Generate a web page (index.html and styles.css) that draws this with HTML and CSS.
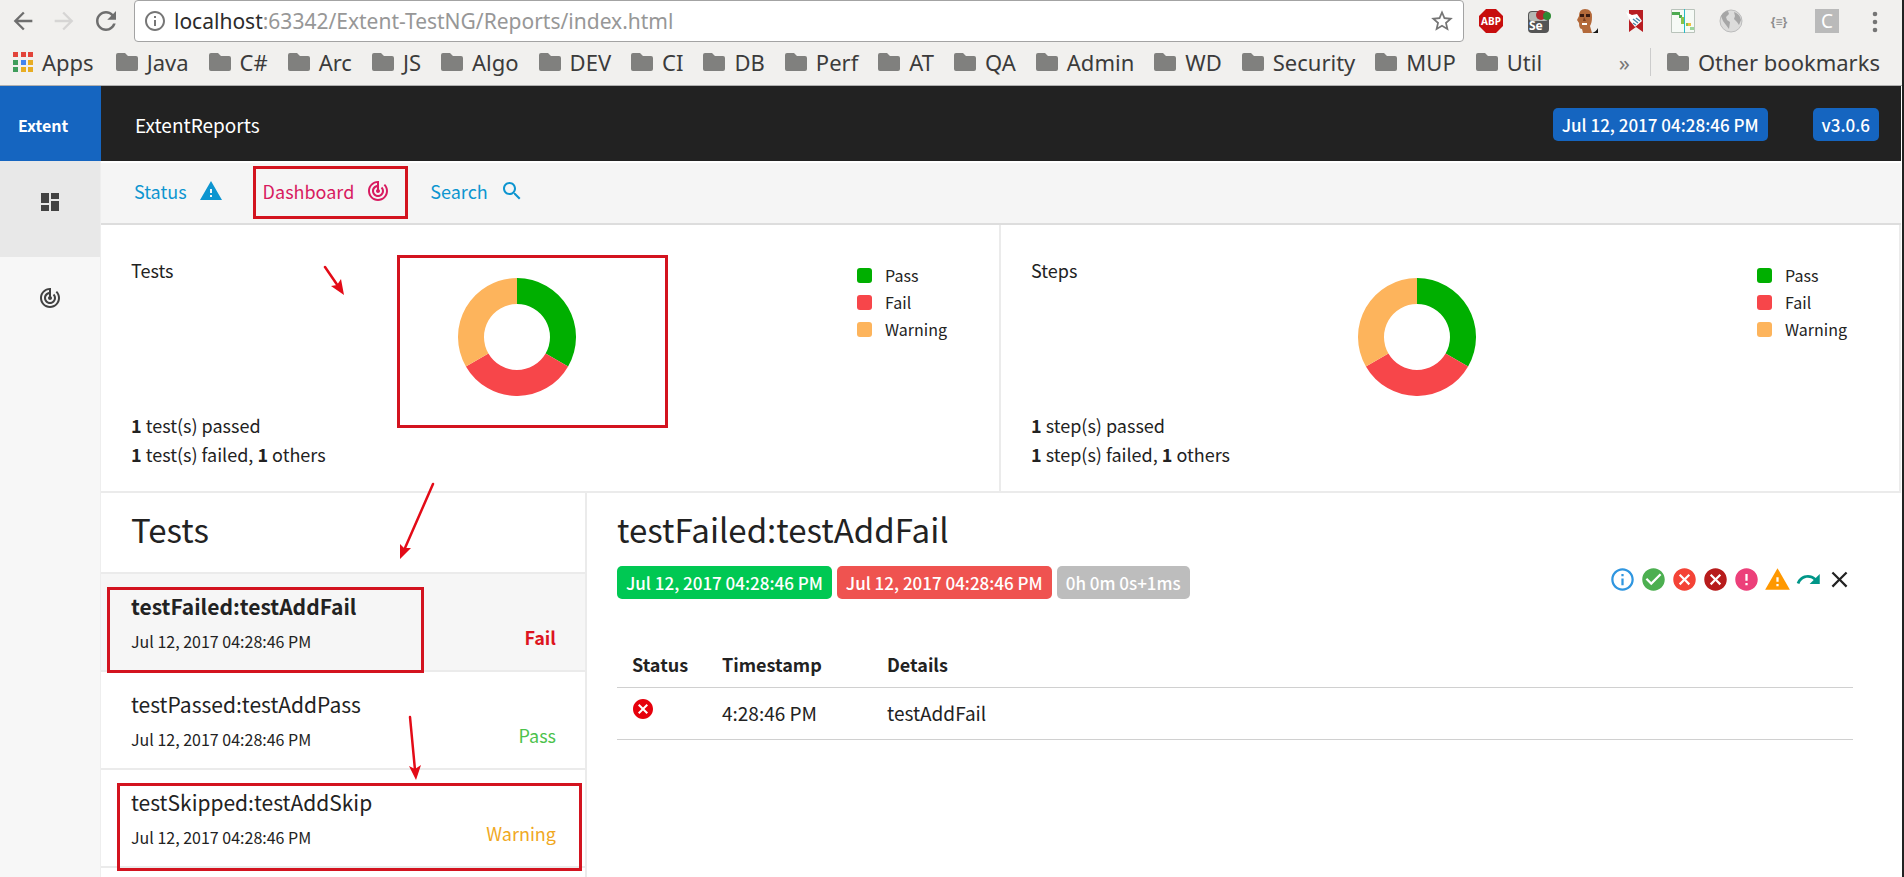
FILE: index.html
```html
<!DOCTYPE html>
<html lang="en">
<head>
<meta charset="utf-8">
<title>ExtentReports</title>
<link rel="stylesheet" href="styles.css">
</head>
<body>
<svg class="defs" aria-hidden="true">
  <symbol id="folder" viewBox="0 0 22 18"><path fill="#80807e" d="M2 0h7l3 3h8a2 2 0 0 1 2 2v11a2 2 0 0 1-2 2H2a2 2 0 0 1-2-2V2a2 2 0 0 1 2-2z"/></symbol>
  <symbol id="track" viewBox="0 0 24 24"><path d="M19.07 4.93l-1.41 1.41C19.1 7.79 20 9.79 20 12c0 4.42-3.58 8-8 8s-8-3.58-8-8c0-4.08 3.05-7.44 7-7.93v2.02C8.16 6.57 6 9.03 6 12c0 3.31 2.69 6 6 6s6-2.69 6-6c0-1.66-.67-3.16-1.76-4.24l-1.41 1.41C15.55 9.9 16 10.9 16 12c0 2.21-1.79 4-4 4s-4-1.79-4-4c0-1.86 1.28-3.41 3-3.86v2.14c-.6.35-1 .98-1 1.72 0 1.1.9 2 2 2s2-.9 2-2c0-.74-.4-1.38-1-1.72V2h-1C6.48 2 2 6.48 2 12s4.48 10 10 10 10-4.48 10-10c0-2.76-1.12-5.26-2.93-7.07z"/></symbol>
  <symbol id="warning" viewBox="0 0 24 24"><path d="M1 21h22L12 2 1 21zm12-3h-2v-2h2v2zm0-4h-2v-4h2v4z"/></symbol>
  <symbol id="cancel" viewBox="0 0 24 24"><path d="M12 2C6.47 2 2 6.47 2 12s4.47 10 10 10 10-4.47 10-10S17.53 2 12 2zm5 13.59L15.59 17 12 13.41 8.41 17 7 15.59 10.59 12 7 8.41 8.41 7 12 10.59 15.59 7 17 8.41 13.41 12 17 15.59z"/></symbol>
  <symbol id="info" viewBox="0 0 24 24"><path d="M11 17h2v-6h-2v6zm1-15C6.48 2 2 6.48 2 12s4.48 10 10 10 10-4.48 10-10S17.52 2 12 2zm0 18c-4.41 0-8-3.59-8-8s3.59-8 8-8 8 3.59 8 8-3.59 8-8 8zM11 9h2V7h-2v2z"/></symbol>
  <symbol id="donut" viewBox="0 0 118 118">
    <g fill="none" stroke-width="26">
      <path stroke="#00af00" d="M59 13A46 46 0 0 1 98.84 82"/>
      <path stroke="#f7464a" d="M98.84 82A46 46 0 0 1 19.16 82"/>
      <path stroke="#fdb45c" d="M19.16 82A46 46 0 0 1 59 13"/>
    </g>
  </symbol>
</svg>

<div class="browser">
  <div class="toolbar">
    <button class="tool" aria-label="Back"><svg width="28" height="28" viewBox="0 0 24 24" fill="#6e6e6e"><path d="M20 11H7.83l5.59-5.59L12 4l-8 8 8 8 1.41-1.41L7.83 13H20v-2z"/></svg></button>
    <button class="tool" aria-label="Forward"><svg width="28" height="28" viewBox="0 0 24 24" fill="#d6d5d4"><path d="M12 4l-1.41 1.41L16.17 11H4v2h12.17l-5.58 5.59L12 20l8-8z"/></svg></button>
    <button class="tool" aria-label="Reload"><svg width="30" height="30" viewBox="0 0 24 24" fill="#6e6e6e"><path d="M17.65 6.35C16.2 4.9 14.21 4 12 4c-4.42 0-7.99 3.58-7.99 8s3.57 8 7.99 8c3.73 0 6.84-2.55 7.73-6h-2.08c-.82 2.33-3.04 4-5.65 4-3.31 0-6-2.69-6-6s2.69-6 6-6c1.66 0 3.14.69 4.22 1.78L13 11h7V4l-2.35 2.35z"/></svg></button>
    <div class="address">
      <svg class="addr-info" width="24" height="24" fill="#767676"><use href="#info"/></svg>
      <span class="url"><span class="host">localhost</span>:63342/Extent-TestNG/Reports/index.html</span>
      <button class="tool star" aria-label="Bookmark this page"><svg width="26" height="26" viewBox="0 0 24 24" fill="#757575"><path d="M22 9.24l-7.19-.62L12 2 9.19 8.63 2 9.24l5.46 4.73L5.82 21 12 17.27 18.18 21l-1.63-7.03L22 9.24zM12 15.4l-3.76 2.27 1-4.28-3.32-2.88 4.38-.38L12 6.1l1.71 4.04 4.38.38-3.32 2.88 1 4.28L12 15.4z"/></svg></button>
    </div>
    <div class="extensions">
      <button class="tool" aria-label="Adblock Plus"><svg width="24" height="24" viewBox="0 0 24 24"><path fill="#c70d0d" d="M7 0h10l7 7v10l-7 7H7l-7-7V7z"/><text x="12" y="16" font-size="10" font-weight="700" text-anchor="middle" fill="#fff">ABP</text></svg></button>
      <button class="tool" aria-label="Selenium"><svg width="24" height="24" viewBox="0 0 24 24"><rect x="1" y="2" width="21" height="22" rx="4" fill="#555"/><rect x="2" y="3" width="19" height="9" rx="3" fill="#b5b8b5"/><circle cx="14" cy="6" r="5" fill="#b3262c"/><circle cx="20" cy="7" r="4" fill="#2d8a34"/><text x="2" y="21" font-size="12" font-weight="700" fill="#fff">Se</text></svg></button>
      <button class="tool" aria-label="User profile"><svg width="24" height="24" viewBox="0 0 24 24"><path fill="#b3693a" d="M4 7Q4 0 10 0q7 0 7 8 0 6-2 9l2 7H8l-1-4q-3 0-3-6l-2-3z"/><path fill="#3a1a10" d="M5 5h4v3H5zM11 5h4v3h-4z"/><path fill="#fff" d="M7 14h5v2H7z"/><path fill="#7c3f20" d="M9 8l2 4H8z"/><path fill="#151515" d="M23 19v5h-6q4-1 6-5z"/></svg></button>
      <button class="tool" aria-label="Bookmark tool"><svg width="24" height="24" viewBox="0 0 24 24"><path fill="#b81d22" d="M6 1h14v22l-7-5-7 5z"/><path fill="#fff" d="M3 3l6 3 5-1 5 7-7 6-5-6z"/><path fill="none" stroke="#4c87a8" stroke-width="1.500" d="M10 10l5 4M13 9l4 3M10 14l3 2"/></svg></button>
      <button class="tool" aria-label="Timeline"><svg width="24" height="24" viewBox="0 0 24 24"><path fill="#f6faf6" stroke="#b9c3ba" d="M.5.5h23v23H.5z"/><path fill="#4caa50" d="M1 3h8v3H1zM8 6h3v3H8z"/><path fill="#8bc34a" d="M10 8h3v7h-3zM15 14h3v3h-3z"/><path fill="#f0c040" d="M17 14h3v3h-3z"/><path fill="#9ad49b" d="M19 18h4v3h-4z"/><path fill="#26bcc8" d="M13 0h1v24h-1z"/></svg></button>
      <button class="tool" aria-label="Globe"><svg width="24" height="24" viewBox="0 0 24 24"><circle cx="12" cy="12" r="11" fill="#dcdcdb" stroke="#bcbcbc"/><path fill="#a6a6a6" d="M2 7q3-5 7-5l1 3-3 3 1 3 3 2-1 7-3-4-3-4zM15 3q6 2 7 8l-2 5-2-3-3-3 1-3z"/></svg></button>
      <button class="tool" aria-label="JSON viewer"><svg width="24" height="24" viewBox="0 0 24 24"><text x="12" y="17" font-size="12" font-weight="700" text-anchor="middle" fill="#8c8c8c">{≡}</text></svg></button>
      <button class="tool" aria-label="C extension"><svg width="24" height="24" viewBox="0 0 24 24"><path fill="#bababa" d="M0 0h24v24H0z"/><text x="12" y="19" font-size="19" text-anchor="middle" fill="#fff">C</text></svg></button>
      <button class="tool" aria-label="Menu"><svg width="24" height="24" viewBox="0 0 24 24" fill="#757575"><circle cx="12" cy="5" r="2.300"/><circle cx="12" cy="13" r="2.300"/><circle cx="12" cy="21" r="2.300"/></svg></button>
    </div>
  </div>
  <nav class="bookmarks" aria-label="Bookmarks">
    <a class="bookmark apps" href="#"><svg width="20" height="20" viewBox="0 0 20 20"><path fill="#e2443a" d="M0 0h5v5H0zM8 0h5v5H8zM15 0h5v5h-5z"/><path fill="#3f9d5b" d="M0 8h5v5H0zM0 15h5v5H0z"/><path fill="#4285f4" d="M8 8h5v5H8z"/><path fill="#e8ad23" d="M15 8h5v5h-5zM8 15h5v5H8zM15 15h5v5h-5z"/></svg>Apps</a>
    <a class="bookmark" href="#"><svg width="22" height="18"><use href="#folder"/></svg>Java</a>
    <a class="bookmark" href="#"><svg width="22" height="18"><use href="#folder"/></svg>C#</a>
    <a class="bookmark" href="#"><svg width="22" height="18"><use href="#folder"/></svg>Arc</a>
    <a class="bookmark" href="#"><svg width="22" height="18"><use href="#folder"/></svg>JS</a>
    <a class="bookmark" href="#"><svg width="22" height="18"><use href="#folder"/></svg>Algo</a>
    <a class="bookmark" href="#"><svg width="22" height="18"><use href="#folder"/></svg>DEV</a>
    <a class="bookmark" href="#"><svg width="22" height="18"><use href="#folder"/></svg>CI</a>
    <a class="bookmark" href="#"><svg width="22" height="18"><use href="#folder"/></svg>DB</a>
    <a class="bookmark" href="#"><svg width="22" height="18"><use href="#folder"/></svg>Perf</a>
    <a class="bookmark" href="#"><svg width="22" height="18"><use href="#folder"/></svg>AT</a>
    <a class="bookmark" href="#"><svg width="22" height="18"><use href="#folder"/></svg>QA</a>
    <a class="bookmark" href="#"><svg width="22" height="18"><use href="#folder"/></svg>Admin</a>
    <a class="bookmark" href="#"><svg width="22" height="18"><use href="#folder"/></svg>WD</a>
    <a class="bookmark" href="#"><svg width="22" height="18"><use href="#folder"/></svg>Security</a>
    <a class="bookmark" href="#"><svg width="22" height="18"><use href="#folder"/></svg>MUP</a>
    <a class="bookmark" href="#"><svg width="22" height="18"><use href="#folder"/></svg>Util</a>
    <button class="tool more" aria-label="More bookmarks">»</button>
    <a class="bookmark other" href="#"><svg width="22" height="18"><use href="#folder"/></svg>Other bookmarks</a>
  </nav>
</div>

<div class="report">
  <header class="topbar">
    <a class="brand" href="#">Extent</a>
    <span class="report-name">ExtentReports</span>
    <span class="label blue">Jul 12, 2017 04:28:46 PM</span>
    <span class="label blue version">v3.0.6</span>
  </header>
  <div class="body">
    <nav class="sidebar" aria-label="Views">
      <a class="side-item active" href="#" aria-label="Tests"><svg width="24" height="24" viewBox="0 0 24 24" fill="#424242"><path d="M3 13h8V3H3v10zm0 8h8v-6H3v6zm10 0h8V11h-8v10zm0-18v6h8V3h-8z"/></svg></a>
      <a class="side-item" href="#" aria-label="Dashboard"><svg width="24" height="24" fill="#424242"><use href="#track"/></svg></a>
    </nav>
    <main class="main">
      <nav class="controls" aria-label="Controls">
        <a class="control" href="#">Status<svg width="24" height="24"><use href="#warning"/></svg></a>
        <a class="control pink" href="#">Dashboard<svg width="24" height="24"><use href="#track"/></svg></a>
        <a class="control" href="#">Search<svg width="24" height="24" viewBox="0 0 24 24"><path d="M15.5 14h-.79l-.28-.27C15.41 12.59 16 11.11 16 9.500 16 5.910 13.090 3 9.500 3S3 5.910 3 9.500 5.910 16 9.500 16c1.610 0 3.090-.59 4.230-1.570l.27.28v.79l5 4.990L20.490 19l-4.990-5zm-6 0C7.010 14 5 11.990 5 9.500S7.010 5 9.500 5 14 7.010 14 9.500 11.990 14 9.500 14z"/></svg></a>
      </nav>
      <section class="charts">
        <article class="chart-card">
          <h2 class="chart-title">Tests</h2>
          <svg class="donut" width="118" height="118" role="img" aria-label="Tests chart"><use href="#donut"/></svg>
          <ul class="legend"><li class="pass">Pass</li><li class="fail">Fail</li><li class="warn">Warning</li></ul>
          <div class="counts"><b>1</b> test(s) passed<br><b>1</b> test(s) failed, <b>1</b> others</div>
        </article>
        <article class="chart-card">
          <h2 class="chart-title">Steps</h2>
          <svg class="donut" width="118" height="118" role="img" aria-label="Steps chart"><use href="#donut"/></svg>
          <ul class="legend"><li class="pass">Pass</li><li class="fail">Fail</li><li class="warn">Warning</li></ul>
          <div class="counts"><b>1</b> step(s) passed<br><b>1</b> step(s) failed, <b>1</b> others</div>
        </article>
      </section>
      <div class="split">
        <section class="test-list">
          <h1 class="list-title">Tests</h1>
          <ul class="tests">
            <li class="test active"><div><span class="test-name">testFailed:testAddFail</span><span class="test-time">Jul 12, 2017 04:28:46 PM</span></div><span class="status fail-text">Fail</span></li>
            <li class="test"><div><span class="test-name">testPassed:testAddPass</span><span class="test-time">Jul 12, 2017 04:28:46 PM</span></div><span class="status pass-text">Pass</span></li>
            <li class="test"><div><span class="test-name">testSkipped:testAddSkip</span><span class="test-time">Jul 12, 2017 04:28:46 PM</span></div><span class="status warn-text">Warning</span></li>
          </ul>
        </section>
        <section class="details">
          <h1 class="details-title">testFailed:testAddFail</h1>
          <div class="details-bar">
            <div class="labels">
              <span class="label green">Jul 12, 2017 04:28:46 PM</span>
              <span class="label red">Jul 12, 2017 04:28:46 PM</span>
              <span class="label grey">0h 0m 0s+1ms</span>
            </div>
            <div class="filters">
              <button class="tool" aria-label="Info"><svg width="27" height="27" fill="#2f96e0"><use href="#info"/></svg></button>
              <button class="tool" aria-label="Pass"><svg width="27" height="27" viewBox="0 0 24 24" fill="#4caf50"><path d="M12 2C6.48 2 2 6.48 2 12s4.48 10 10 10 10-4.48 10-10S17.520 2 12 2zm-2 15l-5-5 1.410-1.410L10 14.170l7.590-7.590L19 8l-9 9z"/></svg></button>
              <button class="tool" aria-label="Fail"><svg width="27" height="27" fill="#f44336"><use href="#cancel"/></svg></button>
              <button class="tool" aria-label="Fatal"><svg width="27" height="27" fill="#b71c1c"><use href="#cancel"/></svg></button>
              <button class="tool" aria-label="Error"><svg width="27" height="27" viewBox="0 0 24 24" fill="#ec407a"><path d="M12 2C6.480 2 2 6.480 2 12s4.480 10 10 10 10-4.480 10-10S17.520 2 12 2zm1 15h-2v-2h2v2zm0-4h-2V7h2v6z"/></svg></button>
              <button class="tool" aria-label="Warning"><svg width="27" height="27" fill="#ff9800"><use href="#warning"/></svg></button>
              <button class="tool" aria-label="Skip"><svg width="27" height="27" viewBox="0 0 24 24" fill="#009688"><path d="M18.400 10.600C16.550 8.990 14.150 8 11.500 8c-4.650 0-8.580 3.030-9.960 7.220L3.900 16c1.050-3.190 4.050-5.500 7.600-5.500 1.950 0 3.730.72 5.120 1.880L13 16h9V7l-3.600 3.600z"/></svg></button>
              <button class="tool" aria-label="Clear filters"><svg width="27" height="27" viewBox="0 0 24 24" fill="#222"><path d="M19 6.410L17.590 5 12 10.590 6.410 5 5 6.410 10.590 12 5 17.590 6.410 19 12 13.410 17.590 19 19 17.590 13.410 12z"/></svg></button>
            </div>
          </div>
          <table class="steps">
            <thead><tr><th class="col-status">Status</th><th class="col-time">Timestamp</th><th>Details</th></tr></thead>
            <tbody><tr><td><svg class="step-icon" width="24" height="24" fill="#e6000c" role="img" aria-label="Fail"><use href="#cancel"/></svg></td><td>4:28:46 PM</td><td>testAddFail</td></tr></tbody>
          </table>
        </section>
      </div>
    </main>
  </div>
</div>

<svg class="annotations" width="600" height="877" aria-hidden="true">
  <g fill="none" stroke="#d3131f" stroke-width="3">
    <rect x="254.500" y="167.500" width="152" height="50"/>
    <rect x="398.500" y="256.500" width="268" height="170"/>
    <rect x="108.500" y="588.500" width="314" height="83"/>
    <rect x="118.500" y="784.500" width="462" height="85"/>
  </g>
  <g stroke="#e30b17" stroke-width="2.500" stroke-linecap="round"><path d="M325 267L338 286M433 484L405 548M410 717L415 770"/></g>
  <g fill="#e30b17"><path d="M344 295L331 286L337 285L341 279zM400 559L400 544L404 548L411 548zM416 780L409 766L415 769L421 765z"/></g>
</svg>
</body>
</html>
```
FILE: styles.css
```css
* { box-sizing: border-box; }

body {
  margin: 0;
  min-height: 100vh;
  display: flex;
  flex-direction: column;
  position: relative;
  background: #fff;
  border-right: 2px solid #222;
  color: #222;
  font-family: "Noto Sans CJK SC", "Noto Sans", sans-serif;
  font-size: 18px;
  line-height: 28px;
}

a { color: inherit; text-decoration: none; }
ul { list-style: none; margin: 0; padding: 0; }
h1, h2 { margin: 0; font-weight: 400; }
svg { display: block; flex: none; }

.defs { position: absolute; width: 0; height: 0; }

.tool {
  padding: 0;
  border: 0;
  background: none;
  color: inherit;
  font: inherit;
  cursor: pointer;
}

/* Browser toolbar */
.browser {
  background: #f1f0ee;
  border-bottom: 1px solid #b0b0b0;
  color: #3b3b3b;
  font-family: "Noto Sans", "Open Sans", sans-serif;
}

.toolbar {
  display: flex;
  align-items: center;
  gap: 13px;
  height: 42px;
  padding-left: 9px;
}

.address {
  flex: 1;
  display: flex;
  align-items: center;
  height: 42px;
  padding: 0 8px;
  background: #fff;
  border: 1px solid #a3a3a3;
  border-radius: 4px;
}

.url { flex: 1; margin-left: 7px; color: #979797; font-size: 21px; }
.host { color: #2b2b2b; }

.extensions { display: flex; gap: 24px; padding: 0 15px 0 2px; }

.bookmarks {
  display: flex;
  align-items: center;
  gap: 20px;
  height: 43px;
  padding: 0 22px 4px 13px;
  font-size: 22px;
}

.bookmark { display: flex; align-items: center; gap: 9px; white-space: nowrap; }
.apps { margin-right: 2px; }
.more { margin-left: auto; color: #777; }
.other { padding-left: 16px; border-left: 1px solid #ccc; }

/* Report */
.report { flex: 1; display: flex; flex-direction: column; margin-right: 1px; }

.topbar {
  display: flex;
  align-items: center;
  height: 75px;
  padding: 2px 22px 0 0;
  background: #222;
  color: #fff;
}

.brand {
  display: flex;
  align-items: center;
  align-self: stretch;
  width: 101px;
  margin-top: -2px;
  padding: 2px 0 0 18px;
  background: #1565c0;
  font-size: 16px;
  font-weight: 700;
}

.report-name { flex: 1; margin-left: 34px; font-size: 19px; }

.label {
  padding: 0 9px;
  border-radius: 5px;
  color: #fff;
  font-size: 17px;
  font-weight: 500;
  line-height: 33px;
  white-space: nowrap;
}

.blue { background: #1565c0; }
.green { background: #00c853; }
.red { background: #ef5350; }
.grey { background: #bdbdbd; }
.version { margin-left: 45px; }

.body { flex: 1; display: flex; }

.sidebar { width: 101px; background: #f7f7f7; border-right: 1px solid #eee; }

.side-item { display: flex; align-items: center; justify-content: center; height: 96px; padding-bottom: 14px; }
.side-item.active { background: #e8e8e8; }

.main { flex: 1; min-width: 0; display: flex; flex-direction: column; }

.controls {
  display: flex;
  align-items: center;
  gap: 40px;
  height: 64px;
  padding: 0 0 4px 33px;
  background: #f5f5f5;
  border-top: 2px solid #fff;
  border-bottom: 2px solid #ddd;
  color: #0d95d0;
}

.control { display: flex; align-items: center; gap: 12px; }
.control svg { fill: currentColor; }
.pink { color: #d81b60; }

.charts { display: grid; grid-template-columns: 1fr 1fr; border-bottom: 2px solid #ebebeb; }

.chart-card {
  display: grid;
  grid-template-columns: 39% 1fr auto;
  grid-template-rows: 155px auto;
  padding: 31px 30px 22px;
  border-right: 2px solid #ebebeb;
}

.chart-title { font-size: 18px; line-height: 28px; }
.donut { margin-top: 22px; }
.legend { padding: 6px 22px 0 0; font-size: 16px; line-height: 27px; }
.legend li { display: flex; align-items: center; gap: 13px; }
.legend li::before { content: ""; width: 15px; height: 15px; border-radius: 3px; background: #00af00; }
.legend .fail::before { background: #f7464a; }
.legend .warn::before { background: #fdb45c; }
.counts { grid-column: 1 / -1; line-height: 29px; }
.counts b { font-weight: 700; }

.split { flex: 1; display: flex; }
.test-list { width: 486px; border-right: 2px solid #ebebeb; }

.list-title {
  padding: 12px 30px 19px;
  border-bottom: 2px solid #ebebeb;
  font-size: 33px;
  line-height: 48px;
}

.test {
  display: flex;
  align-items: center;
  justify-content: space-between;
  padding: 16px 29px 10px 30px;
  border-bottom: 2px solid #ebebeb;
}

.test.active { background: #f6f6f6; }
.test-name { display: block; font-size: 21px; line-height: 32px; }
.test-time { display: block; font-size: 16px; line-height: 38px; }
.test.active .test-name { font-weight: 700; }
.status { align-self: flex-end; line-height: 46px; }
.fail-text { color: #dd1420; font-weight: 700; }
.pass-text { color: #4cc24c; }
.warn-text { color: #f0a81e; }

.details { flex: 1; padding: 12px 48px 0 30px; }
.details-title { font-size: 33px; line-height: 48px; }
.details-bar { display: flex; justify-content: space-between; align-items: flex-start; margin-top: 13px; }
.labels { display: flex; gap: 5px; }
.filters { display: flex; gap: 4px; }

.steps { width: 100%; margin-top: 42px; border-collapse: collapse; text-align: left; }
.steps th { padding: 9px 15px; font-weight: 700; }
.steps td { padding: 11px 15px 12px; font-size: 19px; }
.steps tr { border-bottom: 1px solid #d0d0d0; }
.col-status { width: 90px; }
.col-time { width: 165px; }
.step-icon { margin: -8px 0 0 -1px; }

/* Callout boxes and arrows over the page */
.annotations { position: absolute; top: 0; left: 0; pointer-events: none; overflow: visible; }
```
